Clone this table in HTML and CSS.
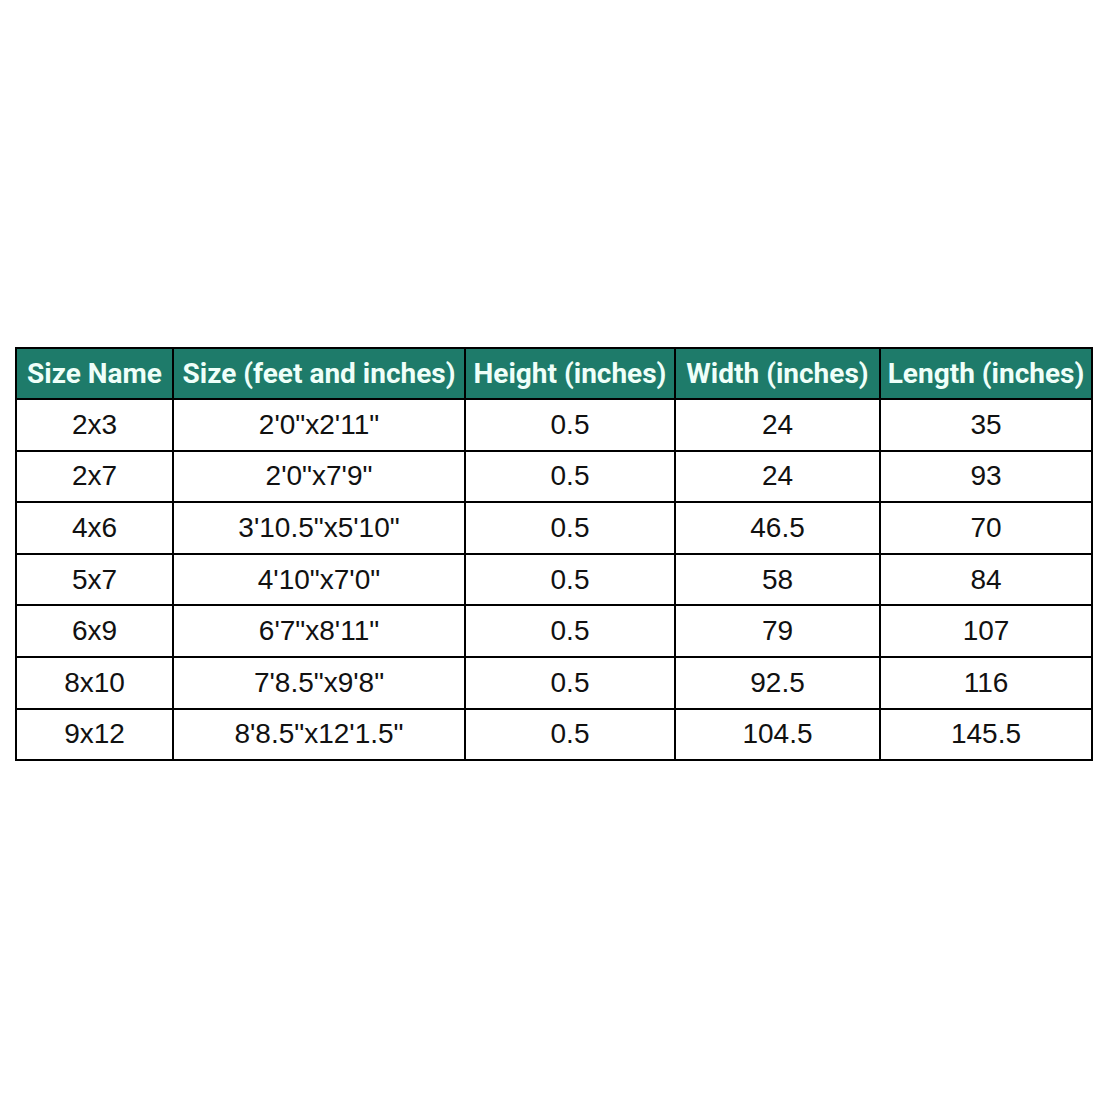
FILE: index.html
```html
<!DOCTYPE html>
<html>
<head>
<meta charset="utf-8">
<link rel="stylesheet" href="styles.css">
</head>
<body>
<div class="page">
<table class="sizes">
<colgroup>
<col class="c1"><col class="c2"><col class="c3"><col class="c4"><col class="c5">
</colgroup>
<thead>
<tr><th>Size Name</th><th>Size (feet and inches)</th><th>Height (inches)</th><th>Width (inches)</th><th>Length (inches)</th></tr>
</thead>
<tbody>
<tr><td>2x3</td><td>2'0"x2'11"</td><td>0.5</td><td>24</td><td>35</td></tr>
<tr><td>2x7</td><td>2'0"x7'9"</td><td>0.5</td><td>24</td><td>93</td></tr>
<tr><td>4x6</td><td>3'10.5"x5'10"</td><td>0.5</td><td>46.5</td><td>70</td></tr>
<tr><td>5x7</td><td>4'10"x7'0"</td><td>0.5</td><td>58</td><td>84</td></tr>
<tr><td>6x9</td><td>6'7"x8'11"</td><td>0.5</td><td>79</td><td>107</td></tr>
<tr><td>8x10</td><td>7'8.5"x9'8"</td><td>0.5</td><td>92.5</td><td>116</td></tr>
<tr><td>9x12</td><td>8'8.5"x12'1.5"</td><td>0.5</td><td>104.5</td><td>145.5</td></tr>
</tbody>
</table>
</div>
</body>
</html>
```
FILE: styles.css
```css
html, body {
  margin: 0;
  padding: 0;
  background: #ffffff;
}
.page {
  width: 1110px;
  height: 1110px;
  padding: 347px 0 0 15px;
  box-sizing: border-box;
}
.sizes {
  border-collapse: collapse;
  table-layout: fixed;
  width: 1078px;
  font-family: "Liberation Sans", Arial, sans-serif;
}
.c1 { width: 157px; }
.c2 { width: 292px; }
.c3 { width: 210px; }
.c4 { width: 205px; }
.c5 { width: 212px; }
.sizes th, .sizes td {
  border: 2px solid #000;
  text-align: center;
  padding: 0;
  white-space: nowrap;
  overflow: hidden;
}
.sizes th {
  background: #1e7b6a;
  color: #effff9;
  font-family: Roboto, "Liberation Sans", sans-serif;
  font-weight: 700;
  font-size: 28px;
  letter-spacing: 0;
  height: 49px;
}
.sizes td {
  color: #111;
  font-size: 28px;
  height: 49.6px;
}
```
